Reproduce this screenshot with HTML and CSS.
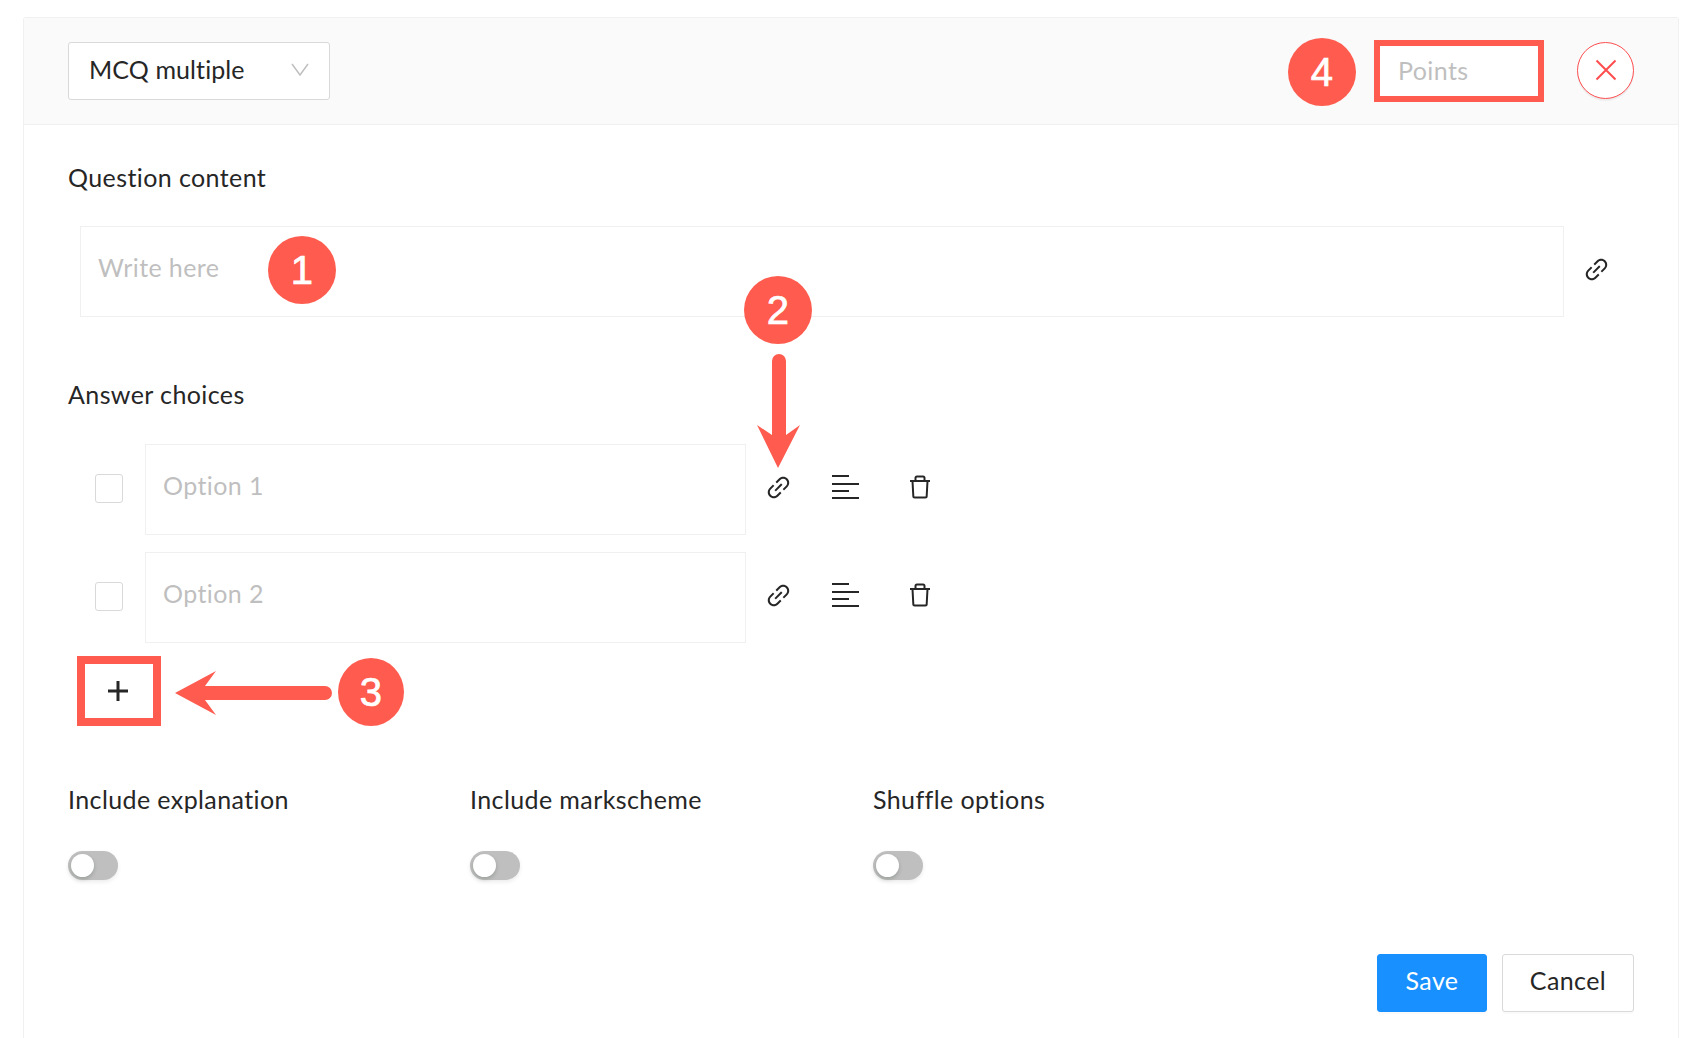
FILE: index.html
```html
<!DOCTYPE html>
<html lang="en">
<head>
    <meta charset="UTF-8">
    <meta name="viewport" content="width=device-width, initial-scale=1.0">
    <title>Question editor</title>
    <link rel="stylesheet" href="styles.css">
</head>
<body>
    <svg width="0" height="0" class="icon-defs">
        <symbol id="icon-link" viewBox="64 64 896 896">
            <path d="M574 665.4a8.03 8.03 0 0 0-11.3 0L446.5 781.6c-53.8 53.8-144.6 59.5-204 0-59.5-59.5-53.8-150.2 0-204l116.2-116.2c3.1-3.1 3.1-8.2 0-11.3l-39.8-39.8a8.03 8.03 0 0 0-11.3 0L191.4 526.5c-84.6 84.6-84.6 221.5 0 306s221.5 84.6 306 0l116.2-116.2c3.1-3.1 3.1-8.2 0-11.3L574 665.4zm258.6-474c-84.6-84.6-221.5-84.6-306 0L410.3 307.6a8.03 8.03 0 0 0 0 11.3l39.7 39.7c3.1 3.1 8.2 3.1 11.3 0l116.2-116.2c53.8-53.8 144.6-59.5 204 0 59.5 59.5 53.8 150.2 0 204L665.3 562.6a8.03 8.03 0 0 0 0 11.3l39.8 39.8c3.1 3.1 8.2 3.1 11.3 0l116.2-116.2c84.5-84.6 84.5-221.5 0-306.1zM610.1 372.3a8.03 8.03 0 0 0-11.3 0L372.3 598.7a8.03 8.03 0 0 0 0 11.3l39.6 39.6c3.1 3.1 8.2 3.1 11.3 0l226.4-226.4c3.1-3.1 3.1-8.2 0-11.3l-39.5-39.6z"/>
        </symbol>
        <symbol id="icon-lines" viewBox="0 0 27 24">
            <path d="M0 1h17M0 9h27M0 16h17M0 23h27" fill="none" stroke="currentColor" stroke-width="2"/>
        </symbol>
        <symbol id="icon-trash" viewBox="0 0 24 24">
            <path d="M2 6h20M4.500 6l.8 15a1.500 1.500 0 0 0 1.500 1.500h10.400a1.500 1.500 0 0 0 1.500-1.500l.8-15M7.500 6V3a1.500 1.500 0 0 1 1.500-1.500h6a1.500 1.500 0 0 1 1.500 1.500v3" fill="none" stroke="currentColor" stroke-width="2"/>
        </symbol>
    </svg>

    <div class="card">
        <header class="card-header">
            <button class="type-select">
                <span>MCQ multiple</span>
                <svg class="chevron" viewBox="0 0 18 13"><path d="M1 1l8 11 8-11" fill="none" stroke="currentColor" stroke-width="1.500"/></svg>
            </button>
            <input class="points-input" type="text" placeholder="Points">
            <button class="close-btn" aria-label="Close">
                <svg viewBox="0 0 22 22"><path d="M1.500 1.500l19 19M20.500 1.500l-19 19" fill="none" stroke="currentColor" stroke-width="2"/></svg>
            </button>
        </header>

        <main class="card-body">
            <div class="section-label">Question content</div>
            <div class="question-row">
                <input class="text-field question-field" type="text" placeholder="Write here">
                <svg class="icon link-icon"><use href="#icon-link"/></svg>
            </div>

            <div class="section-label answers-label">Answer choices</div>
            <div class="option-row">
                <span class="checkbox"></span>
                <input class="text-field option-field" type="text" placeholder="Option 1">
                <svg class="icon link-icon"><use href="#icon-link"/></svg>
                <svg class="icon lines-icon"><use href="#icon-lines"/></svg>
                <svg class="icon trash-icon"><use href="#icon-trash"/></svg>
            </div>
            <div class="option-row">
                <span class="checkbox"></span>
                <input class="text-field option-field" type="text" placeholder="Option 2">
                <svg class="icon link-icon"><use href="#icon-link"/></svg>
                <svg class="icon lines-icon"><use href="#icon-lines"/></svg>
                <svg class="icon trash-icon"><use href="#icon-trash"/></svg>
            </div>
            <button class="add-btn" aria-label="Add option">
                <svg viewBox="0 0 20 20"><path d="M10 0v20M0 10h20" fill="none" stroke="currentColor" stroke-width="3"/></svg>
            </button>

            <div class="toggle-row">
                <div>
                    <div class="section-label">Include explanation</div>
                    <span class="toggle"></span>
                </div>
                <div>
                    <div class="section-label">Include markscheme</div>
                    <span class="toggle"></span>
                </div>
                <div>
                    <div class="section-label">Shuffle options</div>
                    <span class="toggle"></span>
                </div>
            </div>

            <div class="form-actions">
                <button class="btn btn-primary">Save</button>
                <button class="btn">Cancel</button>
            </div>
        </main>
    </div>

    <!-- annotations on top of the form -->
    <span class="badge badge-1">1</span>
    <span class="badge badge-2">2</span>
    <span class="badge badge-3">3</span>
    <span class="badge badge-4">4</span>
    <svg class="arrow arrow-down" viewBox="0 0 44 114">
        <path d="M15 7a7 7 0 0 1 14 0v74l14-10-22 43L0 71l15 10z"/>
    </svg>
    <svg class="arrow arrow-left" viewBox="0 0 157 44">
        <path d="M0 22L41 0 30 15h120a7 7 0 0 1 0 14H30l11 15z"/>
    </svg>
</body>
</html>
```

FILE: styles.css
```css
* {
    margin: 0;
    padding: 0;
    box-sizing: border-box;
}

html, body {
    height: 100%;
    overflow: hidden;
}

body {
    position: relative;
    padding: 17px 25px 0 23px;
    background-color: #fff;
    color: #262626;
    font-family: Lato, "Open Sans", sans-serif;
    font-size: 25px;
    letter-spacing: 0.4px;
}

.icon-defs {
    position: absolute;
}

input, button {
    font: inherit;
    letter-spacing: inherit;
    color: inherit;
}

input::placeholder {
    color: #bfbfbf;
    opacity: 1;
}

.card {
    height: 100%;
    border: 1px solid #f0f0f0;
    border-bottom: none;
    border-radius: 3px 3px 0 0;
}

.card-header {
    display: flex;
    align-items: center;
    height: 107px;
    padding: 0 44px;
    background-color: #fafafa;
    border-bottom: 1px solid #f0f0f0;
}

.type-select {
    display: flex;
    align-items: center;
    justify-content: space-between;
    width: 262px;
    height: 58px;
    padding: 0 20px 4px 20px;
    background-color: #fff;
    border: 1px solid #d9d9d9;
    border-radius: 3px;
    letter-spacing: 0.1px;
}

.chevron {
    width: 18px;
    height: 13px;
    color: #bfbfbf;
}

.points-input {
    width: 170px;
    height: 62px;
    margin-left: auto;
    padding: 0 18px 2px 18px;
    background-color: #fff;
    border: 6px solid #ff5c4f;
    outline: none;
}

.close-btn {
    display: flex;
    align-items: center;
    justify-content: center;
    width: 57px;
    height: 57px;
    margin-left: 33px;
    margin-bottom: 2px;
    color: #ff4d4f;
    background-color: #fff;
    border: 1px solid #ff4d4f;
    border-radius: 50%;
    box-shadow: 0 2px 0 rgba(0, 0, 0, 0.05);
}

.close-btn svg {
    width: 22px;
    height: 22px;
}

.card-body {
    padding: 36px 44px 0;
}

.section-label {
    line-height: 32px;
}

.text-field {
    height: 91px;
    padding: 0 17px 10px;
    background-color: #fff;
    border: 1px solid #f0f0f0;
    outline: none;
}

.icon {
    flex-shrink: 0;
    fill: currentColor;
}

.link-icon {
    width: 25px;
    height: 25px;
    margin-bottom: 5px;
}

.question-row {
    display: flex;
    align-items: center;
    margin: 33px 0 0 12px;
}

.question-field {
    width: 1484px;
    margin-right: 20px;
}

.answers-label {
    margin-top: 61px;
}

.option-row {
    display: flex;
    align-items: center;
    margin: 17px 0 0 27px;
}

.answers-label + .option-row {
    margin-top: 34px;
}

.checkbox {
    width: 28px;
    height: 29px;
    margin-right: 22px;
    margin-bottom: 2px;
    background-color: #fff;
    border: 1px solid #d9d9d9;
    border-radius: 3px;
}

.option-field {
    width: 601px;
    margin-right: 20px;
}

.lines-icon {
    width: 27px;
    height: 24px;
    margin-left: 41px;
    margin-bottom: 6px;
}

.trash-icon {
    width: 24px;
    height: 24px;
    margin-left: 49px;
    margin-bottom: 6px;
}

.add-btn {
    display: flex;
    align-items: center;
    justify-content: center;
    width: 84px;
    height: 70px;
    margin: 13px 0 0 9px;
    background-color: #fff;
    border: 8px solid #ff5c4f;
}

.add-btn svg {
    width: 20px;
    height: 20px;
    margin-right: 3px;
}

.toggle-row {
    display: grid;
    grid-template-columns: 402px 403px 1fr;
    margin-top: 57px;
}

.toggle {
    display: block;
    position: relative;
    width: 50px;
    height: 29px;
    margin-top: 36px;
    background-color: #bfbfbf;
    border-radius: 15px;
    box-shadow: 0 2px 4px rgba(0, 0, 0, 0.08);
}

.toggle::after {
    content: "";
    position: absolute;
    top: 3px;
    left: 3px;
    width: 23px;
    height: 23px;
    background-color: #fff;
    border-radius: 50%;
    box-shadow: 0 2px 4px rgba(0, 35, 11, 0.2);
}

.form-actions {
    display: flex;
    justify-content: flex-end;
    gap: 15px;
    margin-top: 74px;
}

.btn {
    width: 132px;
    height: 58px;
    padding-bottom: 6px;
    background-color: #fff;
    border: 1px solid #d9d9d9;
    border-radius: 3px;
    box-shadow: 0 2px 0 rgba(0, 0, 0, 0.02);
}

.btn-primary {
    width: 110px;
    color: #fff;
    background-color: #1890ff;
    border-color: #1890ff;
}

/* annotations */
.badge {
    position: absolute;
    display: flex;
    align-items: center;
    justify-content: center;
    width: 68px;
    height: 68px;
    color: #fff;
    background-color: #ff5c4f;
    border-radius: 50%;
    font-family: "Liberation Sans", Arial, sans-serif;
    font-size: 40px;
    -webkit-text-stroke: 0.7px #fff;
}

.badge-1 { left: 268px; top: 236px; }
.badge-2 { left: 744px; top: 276px; }
.badge-3 { left: 338px; top: 658px; width: 66px; }
.badge-4 { left: 1288px; top: 38px; }

.arrow {
    position: absolute;
    fill: #ff5c4f;
}

.arrow-down {
    left: 757px;
    top: 354px;
    width: 44px;
    height: 114px;
}

.arrow-left {
    left: 175px;
    top: 671px;
    width: 157px;
    height: 44px;
}
```
